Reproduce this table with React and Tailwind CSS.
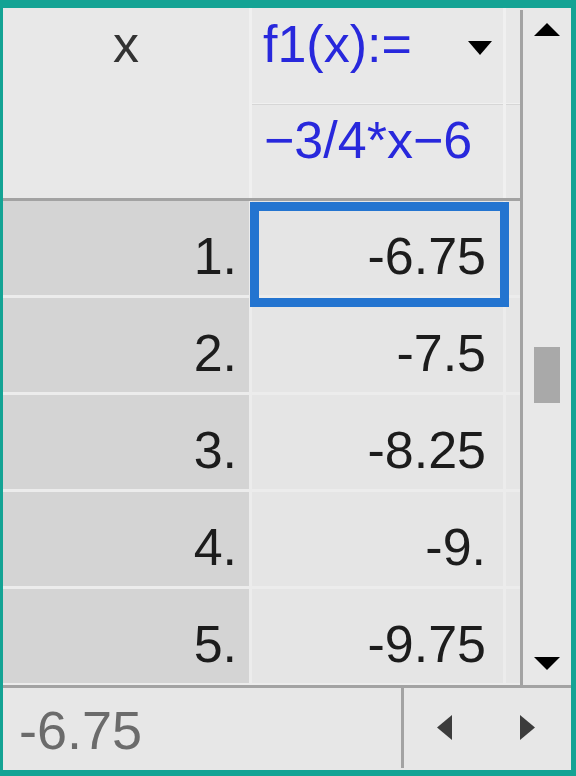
const rows = [
  { x: "1.", y: "-6.75", selected: true },
  { x: "2.", y: "-7.5" },
  { x: "3.", y: "-8.25" },
  { x: "4.", y: "-9." },
  { x: "5.", y: "-9.75" },
];

function Triangle({ dir, className }) {
  const points = {
    up: "0,13 13,0 26,13",
    down: "0,0 24,0 12,14",
  };
  return (
    <svg
      width={dir === "down" ? 24 : 26}
      height={dir === "down" ? 14 : 13}
      viewBox={dir === "down" ? "0 0 24 14" : "0 0 26 13"}
      className={className}
    >
      <polygon points={points[dir]} fill="#000" />
    </svg>
  );
}

function Arrow({ dir }) {
  return (
    <svg width="15" height="25" viewBox="0 0 15 25">
      <polygon
        points={dir === "left" ? "15,0 15,25 0,12.5" : "0,0 0,25 15,12.5"}
        fill="#3c3c3c"
      />
    </svg>
  );
}

function DataRow({ x, y, selected }) {
  return (
    <div className="grid grid-cols-[246px_251px_14px] gap-x-[3px] h-[94px]">
      <div className="bg-[#d4d4d4] text-right pr-[12px] pt-[29px] text-[#1c1c1c]">{x}</div>
      <div className="relative bg-[#e5e5e5] text-right pr-[17px] pt-[29px] text-[#1c1c1c]">
        {y}
        {selected && (
          <div className="absolute left-[-2px] top-[1px] w-[259px] h-[105px] border-[9px] border-[#2374d0] z-10" />
        )}
      </div>
      <div className="bg-[#e6e6e6]" />
    </div>
  );
}

export default function App() {
  return (
    <div
      className="w-[576px] h-[776px] bg-[#14a394] pt-[8px] pl-[3px] pr-[5px] pb-[6px] text-[52px] leading-[52px]"
      style={{ fontFamily: '"Liberation Sans", Arial, sans-serif' }}
    >
      <div className="h-full flex flex-col bg-[#e7e7e7]">
        <div className="flex h-[677px]">
          <div className="w-[517px] flex flex-col overflow-hidden bg-[#ececec]">
            {/* header */}
            <div className="grid grid-cols-[246px_251px_14px] grid-rows-[95px_94px] gap-x-[3px] gap-y-[1px] h-[190px] bg-[#f0f0f0]">
              <div className="row-span-2 bg-[#e8e8e8] text-center pt-[10px] text-[#333]">x</div>
              <div className="relative bg-[#e8e8e8] pl-[11px] pt-[10px] text-[#2828dc]">
                f1(x):=
                <Triangle dir="down" className="absolute left-[216px] top-[33px]" />
              </div>
              <div className="bg-[#e8e8e8]" />
              <div className="bg-[#e8e8e8] pl-[12px] pt-[9px] text-[#2828dc] border-t border-[#d6d6d6]">
                −3/4*x−6
              </div>
              <div className="bg-[#e8e8e8] border-t border-[#d6d6d6]" />
            </div>
            <div className="h-[3px] bg-[#a2a2a2]" />
            <div className="flex flex-col gap-y-[3px]">
              {rows.map((r) => (
                <DataRow key={r.x} {...r} />
              ))}
            </div>
          </div>
          <div className="w-[3px] mt-[2px] bg-[#a3a3a3]" />
          <div className="w-[48px] flex flex-col items-center bg-[#e8e8e8]">
            <Triangle dir="up" className="mt-[15px]" />
            <div className="mt-[311px] w-[26px] h-[56px] bg-[#a9a9a9]" />
            <Triangle dir="up" className="mt-[254px] rotate-180" />
          </div>
        </div>
        <div className="h-[3px] bg-[#a3a3a3]" />
        <div className="flex flex-1">
          <div className="w-[398px] pl-[16px] pt-[15px] text-[54px] leading-[54px] text-[#6b6b6b]">-6.75</div>
          <div className="w-[3px] mb-[2px] bg-[#a3a3a3]" />
          <div className="flex-1 relative">
            <div className="absolute left-[33px] top-[27px]">
              <Arrow dir="left" />
            </div>
            <div className="absolute left-[116px] top-[27px]">
              <Arrow dir="right" />
            </div>
          </div>
        </div>
      </div>
    </div>
  );
}
